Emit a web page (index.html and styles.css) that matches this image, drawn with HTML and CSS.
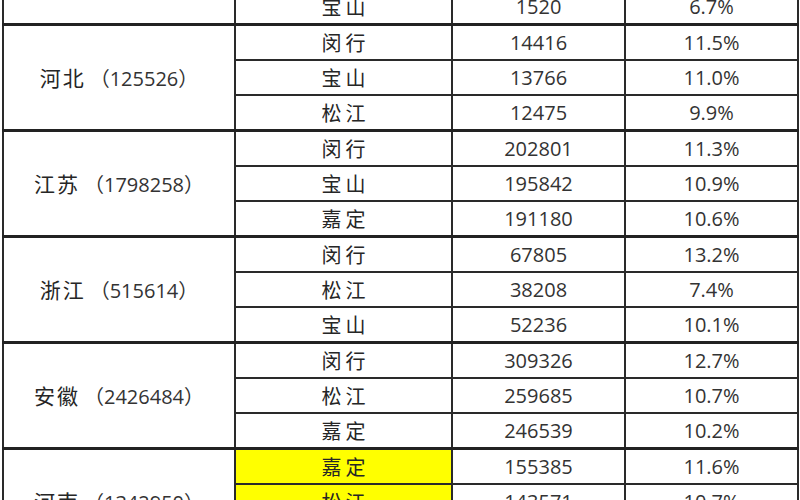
FILE: index.html
```html
<!DOCTYPE html>
<html lang="zh">
<head>
<meta charset="utf-8">
<link rel="stylesheet" href="styles.css">
</head>
<body>
<table class="data">
  <colgroup>
    <col class="c1"><col class="c2"><col class="c3"><col class="c4">
  </colgroup>
  <tbody>
    <tr class="lead">
      <td class="prov"></td><td class="dist">宝山</td><td class="num">1520</td><td class="num">6.7%</td>
    </tr>
    <tr class="group">
      <td class="prov" rowspan="3">河北<span class="paren">（125526）</span></td><td class="dist">闵行</td><td class="num">14416</td><td class="num">11.5%</td>
    </tr>
    <tr><td class="dist">宝山</td><td class="num">13766</td><td class="num">11.0%</td></tr>
    <tr><td class="dist">松江</td><td class="num">12475</td><td class="num">9.9%</td></tr>
    <tr class="group">
      <td class="prov" rowspan="3">江苏<span class="paren">（1798258）</span></td><td class="dist">闵行</td><td class="num">202801</td><td class="num">11.3%</td>
    </tr>
    <tr><td class="dist">宝山</td><td class="num">195842</td><td class="num">10.9%</td></tr>
    <tr><td class="dist">嘉定</td><td class="num">191180</td><td class="num">10.6%</td></tr>
    <tr class="group">
      <td class="prov" rowspan="3">浙江<span class="paren">（515614）</span></td><td class="dist">闵行</td><td class="num">67805</td><td class="num">13.2%</td>
    </tr>
    <tr><td class="dist">松江</td><td class="num">38208</td><td class="num">7.4%</td></tr>
    <tr><td class="dist">宝山</td><td class="num">52236</td><td class="num">10.1%</td></tr>
    <tr class="group">
      <td class="prov" rowspan="3">安徽<span class="paren">（2426484）</span></td><td class="dist">闵行</td><td class="num">309326</td><td class="num">12.7%</td>
    </tr>
    <tr><td class="dist">松江</td><td class="num">259685</td><td class="num">10.7%</td></tr>
    <tr><td class="dist">嘉定</td><td class="num">246539</td><td class="num">10.2%</td></tr>
    <tr class="group">
      <td class="prov" rowspan="3">河南<span class="paren">（1342950）</span></td><td class="dist hl">嘉定</td><td class="num">155385</td><td class="num">11.6%</td>
    </tr>
    <tr><td class="dist hl">松江</td><td class="num">143571</td><td class="num">10.7%</td></tr>
    <tr><td class="dist">宝山</td><td class="num">120365</td><td class="num">8.9%</td></tr>
  </tbody>
</table>
</body>
</html>
```

FILE: styles.css
```css
html, body {
  margin: 0;
  padding: 0;
  background: #ffffff;
  overflow: hidden;
}

.data {
  border-collapse: collapse;
  table-layout: fixed;
  width: 796px;
  margin: -10px 0 0 2px;
  color: #2b2b2b;
}

.c1 { width: 232px; }
.c2 { width: 217px; }
.c3 { width: 173px; }
.c4 { width: 173px; }

.data td {
  border: 2px solid #2a2a2a;
  height: 33px;
  padding: 0;
  text-align: center;
  vertical-align: middle;
  line-height: 1;
}

.data tr.group td {
  border-top: 3px solid #222222;
}

.data tr.lead td {
  border-top: none;
}

.prov {
  font-family: "Noto Sans CJK SC", sans-serif;
  font-size: 21px;
  letter-spacing: 2px;
  color: #262626;
}

.paren {
  font-family: "Open Sans", "Noto Sans CJK SC", sans-serif;
  letter-spacing: 0;
  font-size: 20px;
  margin-left: 4px;
  color: #333333;
}

.dist {
  font-family: "Noto Sans CJK SC", sans-serif;
  font-size: 20px;
  letter-spacing: 4px;
  text-indent: 4px;
  color: #262626;
}

.hl {
  background: #ffff00;
}

.num {
  font-family: "Open Sans", sans-serif;
  font-size: 20px;
  color: #333333;
}
```
